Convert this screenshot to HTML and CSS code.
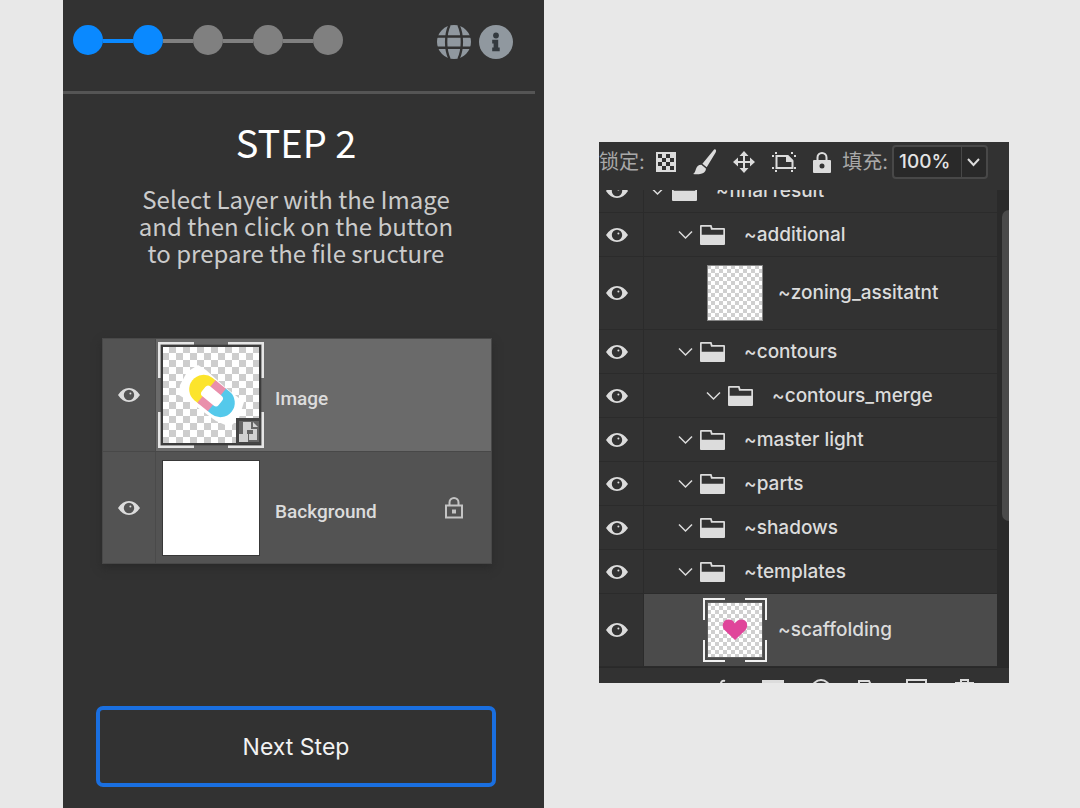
FILE: index.html
```html
<!DOCTYPE html>
<html lang="en">
<head>
<meta charset="utf-8">
<meta name="viewport" content="width=device-width, initial-scale=1">
<title>Step 2</title>
<link rel="stylesheet" href="styles.css">
</head>
<body>
<svg class="defs" aria-hidden="true">
  <defs>
    <symbol id="eye" viewBox="0 0 22 14">
      <path fill-rule="evenodd" d="M0 7C3 2.400 6.700 0 11 0s8 2.400 11 7c-3 4.600-6.700 7-11 7S3 11.600 0 7zM11 1.800a5.200 5.200 0 1 0 0 10.400a5.200 5.200 0 0 0 0-10.400z"/>
      <circle cx="12.400" cy="5.600" r="1"/>
    </symbol>
    <symbol id="chevron" viewBox="0 0 15 10">
      <path d="M1 1.500l6.500 6.500L14 1.500" fill="none" stroke="currentColor" stroke-width="1.500"/>
    </symbol>
    <symbol id="folder" viewBox="0 0 25 20">
      <path fill-rule="evenodd" d="M1 0h10.500l1 3H24a1 1 0 0 1 1 1v15a1 1 0 0 1-1 1H1a1 1 0 0 1-1-1V1a1 1 0 0 1 1-1zM1.700 1.700v8h21.600V4.700H11l-.8-3z"/>
    </symbol>
    <pattern id="checks-small" width="8" height="8" patternUnits="userSpaceOnUse">
      <path d="M0 0h8v8H0z" fill="#fff"/><path d="M0 0h4v4H0zM4 4h4v4H4z" fill="#cfcfcf"/>
    </pattern>
    <pattern id="checks-large" width="14" height="14" patternUnits="userSpaceOnUse" x="4" y="4">
      <path d="M0 0h14v14H0z" fill="#fff"/><path d="M7 0h7v7H7zM0 7h7v7H0z" fill="#cdcdcd"/>
    </pattern>
  </defs>
</svg>

<main class="wizard">
  <header class="wizard-header">
    <ol class="steps" aria-label="Progress">
      <li class="step done"></li>
      <li class="step done"></li>
      <li class="step"></li>
      <li class="step"></li>
      <li class="step"></li>
    </ol>
    <div class="header-actions">
      <button class="icon-button" aria-label="Language">
        <svg viewBox="0 0 34 34" width="34" height="34">
          <circle cx="17" cy="17" r="17" fill="#90989f"/>
          <path d="M0 11.500h34M0 22.800h34M12.500 0C8 10 8 24 12.500 34M21.500 0C26 10 26 24 21.500 34" fill="none" stroke="#323232" stroke-width="2.400"/>
        </svg>
      </button>
      <button class="icon-button" aria-label="Information">
        <svg viewBox="0 0 34 34" width="34" height="34">
          <circle cx="17" cy="17" r="17" fill="#90989f"/>
          <circle cx="17" cy="10.500" r="2.900" fill="#343a3f"/>
          <path d="M13.200 14.800h6v7.800h1.500v3.600h-7.500v-3.600h1.400v-4.200h-1.400z" fill="#343a3f"/>
        </svg>
      </button>
    </div>
  </header>

  <section class="wizard-body">
    <h1>STEP 2</h1>
    <p class="intro">Select Layer with the Image<br>and then click on the button<br>to prepare the file sructure</p>

    <ul class="sample">
      <li class="sample-row selected">
        <span class="sample-eye"><svg width="22" height="14"><use href="#eye"/></svg></span>
        <svg class="sample-thumb" viewBox="0 0 106 106" width="106" height="106">
          <path d="M2 2h102v102H2z" fill="#5b5b5b"/>
          <path d="M3 3h100v100H3z" fill="#3c3c3c"/>
          <path d="M5 5h96v96H5z" fill="url(#checks-large)"/>
          <path d="M22 43l7-13 11-7 8 5 20 18 18 14-5 16-9 9-14-6-26-19-11-7z" fill="#fff"/>
          <g transform="translate(54 54) rotate(39) scale(.9) translate(-54 -53)">
            <path d="M48 37H42a16 16 0 0 0 0 32h6z" fill="#fce42c"/>
            <path d="M60 37h6a16 16 0 0 1 0 32h-6z" fill="#54c9eb"/>
            <path d="M46 37h15v32H46z" fill="#e98fab"/>
            <rect x="42" y="46" width="24" height="14" rx="4" fill="#fff"/>
          </g>
          <path d="M78 76h25v26H78z" fill="#444"/>
          <path d="M81 79h20v21H81z" fill="#666"/>
          <path d="M85 80h8v7h6v11h-8v-6h4v-4h-6v4h-4zM95 80l5 5h-5zM81 92h9v8h-9z" fill="#d2d2d2"/>
          <path d="M1 36V1h35M70 1h35v35M105 70v35H70M36 105H1V70" fill="none" stroke="#e6e6e6" stroke-width="3"/>
        </svg>
        <span class="sample-name">Image</span>
      </li>
      <li class="sample-row">
        <span class="sample-eye"><svg width="22" height="14"><use href="#eye"/></svg></span>
        <svg class="sample-thumb" viewBox="0 0 106 106" width="106" height="106">
          <path d="M4 5h98v96H4z" fill="#383838"/><path d="M5 6h96v94H5z" fill="#fff"/>
        </svg>
        <span class="sample-name">Background</span>
        <svg class="sample-lock" viewBox="0 0 20 22" width="20" height="22">
          <path d="M2 8.500h16v12H2zM5.500 8V5.500a4.500 4.500 0 0 1 9 0V8" fill="none" stroke="currentColor" stroke-width="2"/>
          <path d="M8 12.500h4v4H8z" fill="currentColor"/>
        </svg>
      </li>
    </ul>

    <button class="next">Next Step</button>
  </section>
</main>

<aside class="layers" aria-label="Layers">
  <div class="toolbar">
    <span class="tool-label">锁定:</span>
    <div class="tools">
      <button class="icon-button" aria-label="Lock transparent pixels">
        <svg viewBox="0 0 20 20" width="20" height="20"><path fill-rule="evenodd" d="M0 0h20v20H0zM2 2v4h4V2zM10 2v4h4V2zM6 6v4h4V6zM14 6v4h4V6zM2 10v4h4v-4zM10 10v4h4v-4zM6 14v4h4v-4zM14 14v4h4v-4z"/></svg>
      </button>
      <button class="icon-button" aria-label="Lock image pixels">
        <svg viewBox="0 0 24 26" width="24" height="26"><path d="M22.500.6c1 .8.600 2.100 0 3.200l-8.800 14.400-4.300-3.500L20.300 1.500c.6-.8 1.400-1.500 2.200-.9zM8.400 15.700l4.500 3.700c.3 3.200-2.700 6.600-12.900 5.600 3.600-1.500 1.800-9.400 8.400-9.300z"/></svg>
      </button>
      <button class="icon-button" aria-label="Lock position">
        <svg viewBox="0 0 22 22" width="22" height="22"><path d="M11 0l4.500 5H12v5h5V6.500l5 4.500-5 4.500V12h-5v5h3.500L11 22l-4.500-5H10v-5H5v3.500L0 11l5-4.500V10h5V5H6.500z"/></svg>
      </button>
      <button class="icon-button" aria-label="Lock artboard nesting">
        <svg viewBox="0 0 24 20" width="24" height="20"><path d="M4.500 4h11l5 5v7h-16z" fill="none" stroke="currentColor" stroke-width="2"/><path d="M14 3h2l5 5v2h-7zM3 0h2v2H3zM19 0h2v2h-2zM0 3h2v2H0zM22 3h2v2h-2zM0 15h2v2H0zM22 15h2v2h-2zM3 18h2v2H3zM19 18h2v2h-2z"/></svg>
      </button>
      <button class="icon-button" aria-label="Lock all">
        <svg viewBox="0 0 18 21" width="18" height="21"><path fill-rule="evenodd" d="M3.500 8V5.500a5.500 5.500 0 0 1 11 0V8H17a1 1 0 0 1 1 1v11a1 1 0 0 1-1 1H1a1 1 0 0 1-1-1V9a1 1 0 0 1 1-1zM5.500 8h7V5.500a3.500 3.500 0 0 0-7 0zM9 11.500a2.500 2.500 0 1 0 0 5a2.500 2.500 0 0 0 0-5z"/></svg>
      </button>
    </div>
    <label class="tool-label" for="fill">填充:</label>
    <div class="fill-box">
      <input id="fill" type="text" value="100%">
      <button class="icon-button fill-menu" aria-label="Fill options"><svg viewBox="0 0 13 9" width="13" height="9"><path d="M1 1l5.500 6L12 1" fill="none" stroke="currentColor" stroke-width="2"/></svg></button>
    </div>
  </div>

  <div class="viewport">
    <ul class="tree">
      <li class="row top"><span class="eye"><svg width="22" height="14"><use href="#eye"/></svg></span><span class="cell"><svg class="chevron" width="15" height="10"><use href="#chevron"/></svg><svg class="folder" width="25" height="20"><use href="#folder"/></svg>~final result</span></li>
      <li class="row"><span class="eye"><svg width="22" height="14"><use href="#eye"/></svg></span><span class="cell"><svg class="chevron" width="15" height="10"><use href="#chevron"/></svg><svg class="folder" width="25" height="20"><use href="#folder"/></svg>~additional</span></li>
      <li class="row tall"><span class="eye"><svg width="22" height="14"><use href="#eye"/></svg></span><span class="cell"><svg class="thumb" viewBox="0 0 64 64" width="64" height="64"><path d="M4 4h56v56H4z" fill="#858585"/><path d="M5 5h54v54H5z" fill="url(#checks-small)"/></svg>~zoning_assitatnt</span></li>
      <li class="row"><span class="eye"><svg width="22" height="14"><use href="#eye"/></svg></span><span class="cell"><svg class="chevron" width="15" height="10"><use href="#chevron"/></svg><svg class="folder" width="25" height="20"><use href="#folder"/></svg>~contours</span></li>
      <li class="row nested"><span class="eye"><svg width="22" height="14"><use href="#eye"/></svg></span><span class="cell"><svg class="chevron" width="15" height="10"><use href="#chevron"/></svg><svg class="folder" width="25" height="20"><use href="#folder"/></svg>~contours_merge</span></li>
      <li class="row"><span class="eye"><svg width="22" height="14"><use href="#eye"/></svg></span><span class="cell"><svg class="chevron" width="15" height="10"><use href="#chevron"/></svg><svg class="folder" width="25" height="20"><use href="#folder"/></svg>~master light</span></li>
      <li class="row"><span class="eye"><svg width="22" height="14"><use href="#eye"/></svg></span><span class="cell"><svg class="chevron" width="15" height="10"><use href="#chevron"/></svg><svg class="folder" width="25" height="20"><use href="#folder"/></svg>~parts</span></li>
      <li class="row"><span class="eye"><svg width="22" height="14"><use href="#eye"/></svg></span><span class="cell"><svg class="chevron" width="15" height="10"><use href="#chevron"/></svg><svg class="folder" width="25" height="20"><use href="#folder"/></svg>~shadows</span></li>
      <li class="row"><span class="eye"><svg width="22" height="14"><use href="#eye"/></svg></span><span class="cell"><svg class="chevron" width="15" height="10"><use href="#chevron"/></svg><svg class="folder" width="25" height="20"><use href="#folder"/></svg>~templates</span></li>
      <li class="row tall current"><span class="eye"><svg width="22" height="14"><use href="#eye"/></svg></span><span class="cell"><svg class="thumb" viewBox="0 0 64 64" width="64" height="64"><path d="M4 4h56v56H4z" fill="#5c5c5c"/><path d="M5 5h54v54H5z" fill="url(#checks-small)"/><path d="M32 42L21.500 32c-3.500-4-1.500-10.500 4-10.500 3 0 5 1.500 6.500 4 1.500-2.500 3.500-4 6.500-4 5.500 0 7.500 6.500 4 10.500z" fill="#e0459a"/><path d="M1 22V1h21M42 1h21v21M63 42v21H42M22 63H1V42" fill="none" stroke="#f2f2f2" stroke-width="2"/></svg>~scaffolding</span></li>
    </ul>
    <div class="track"><div class="grip"></div></div>
  </div>

  <div class="footer-tools">
    <button class="icon-button" aria-label="Layer style"><svg viewBox="0 0 24 22" width="24" height="22"><path d="M12 2c-3-1-4 1-4.500 4L6 16M5 7h6M13 9l6 7M19 9l-6 7" fill="none" stroke="currentColor" stroke-width="2"/></svg></button>
    <button class="icon-button" aria-label="Add mask"><svg viewBox="0 0 24 22" width="24" height="22"><path fill-rule="evenodd" d="M1 1h22v18H1zM12 6a4 4 0 1 0 0 8a4 4 0 0 0 0-8z"/></svg></button>
    <button class="icon-button" aria-label="Add adjustment"><svg viewBox="0 0 24 22" width="24" height="22"><circle cx="12" cy="10" r="9" fill="none" stroke="currentColor" stroke-width="2"/></svg></button>
    <button class="icon-button" aria-label="New group"><svg viewBox="0 0 24 22" width="24" height="22"><path d="M2 18V2h10l2 4h9v12z" fill="none" stroke="currentColor" stroke-width="2"/></svg></button>
    <button class="icon-button" aria-label="New layer"><svg viewBox="0 0 24 22" width="24" height="22"><path d="M2 1h19v17H2z" fill="none" stroke="currentColor" stroke-width="2"/></svg></button>
    <button class="icon-button" aria-label="Delete layer"><svg viewBox="0 0 24 22" width="24" height="22"><path d="M2 4h19M8 4V1h7v3M5 4v16h13V4" fill="none" stroke="currentColor" stroke-width="2"/></svg></button>
  </div>
</aside>
</body>
</html>
```
FILE: styles.css
```css
* {
  box-sizing: border-box;
}

body {
  display: grid;
  grid-template-columns: minmax(0, 481fr) minmax(0, 410fr);
  gap: 55px;
  align-items: start;
  min-height: 100vh;
  margin: 0;
  padding: 0 71px 0 63px;
  background: #e8e8e8;
  color: #dcdcdc;
  font-family: Inter, "Noto Sans CJK SC", sans-serif;
}

ul,
ol {
  margin: 0;
  padding: 0;
  list-style: none;
}

svg {
  display: block;
  flex: none;
  fill: currentColor;
}

.defs {
  position: absolute;
  width: 0;
  height: 0;
}

.icon-button {
  display: block;
  flex: none;
  padding: 0;
  border: 0;
  background: none;
  color: inherit;
}

/* Wizard */

.wizard {
  display: flex;
  flex-direction: column;
  min-height: 100vh;
  background: #323232;
}

.wizard-header {
  display: flex;
  justify-content: space-between;
  align-items: flex-start;
  margin-right: 9px;
  padding: 25px 22px 32px 10px;
  border-bottom: 3px solid #555;
}

.steps {
  display: flex;
  gap: 30px;
}

.step {
  position: relative;
  width: 30px;
  height: 30px;
  border-radius: 50%;
  background: #808080;
}

.step + .step::before {
  content: "";
  position: absolute;
  top: 14px;
  right: 100%;
  width: 30px;
  height: 4px;
  background: #808080;
}

.step.done,
.step.done + .step.done::before {
  background: #0a89ff;
}

.header-actions {
  display: flex;
  gap: 8px;
}

.wizard-body {
  display: flex;
  flex: 1;
  flex-direction: column;
  padding: 18px 48px 21px 33px;
}

h1 {
  margin: 0;
  color: #fff;
  font: 400 38px/60px "Noto Sans CJK SC", sans-serif;
  text-align: center;
}

.intro {
  margin: 13px 0 0;
  color: #cbcbcb;
  font: 400 24px/27px "Noto Sans CJK SC", sans-serif;
  text-align: center;
}

.sample {
  margin: 72px 4px 0 6px;
  border: 1px solid #484848;
  background: #535353;
  box-shadow: 0 4px 8px #2a2a2a;
}

.sample-row {
  display: flex;
  align-items: center;
  height: 112px;
  padding-right: 27px;
}

.sample-row + .sample-row {
  border-top: 1px solid #484848;
}

.sample-row.selected {
  background: #6a6a6a;
}

.sample-eye {
  display: flex;
  align-items: center;
  align-self: stretch;
  width: 53px;
  padding-left: 15px;
  border-right: 1px solid #4a4a4a;
  background: #535353;
}

.sample-thumb {
  margin-left: 2px;
}

.sample-name {
  flex: 1;
  margin: 8px 0 0 11px;
  font: 500 19px/24px Roboto, sans-serif;
}

.sample-lock {
  color: #c4c4c4;
}

.next {
  height: 81px;
  margin-top: auto;
  border: 4px solid #1a6fe0;
  border-radius: 7px;
  background: none;
  color: #f2f2f2;
  font: 400 23px/28px Inter, sans-serif;
}

/* Layers panel */

.layers {
  margin-top: 142px;
  overflow: hidden;
  background: #323232;
}

.toolbar {
  display: flex;
  align-items: center;
  height: 48px;
  padding: 0 21px 8px 0;
}

.tool-label {
  color: #a8a8a8;
  font-size: 20px;
  line-height: 24px;
  white-space: nowrap;
}

.tools {
  display: flex;
  flex: 1;
  justify-content: space-between;
  align-items: center;
  padding: 0 11px;
}

.fill-box {
  display: flex;
  width: 96px;
  height: 34px;
  margin-left: 4px;
  border: 2px solid #484848;
  border-radius: 4px;
  background: #292929;
}

.fill-box input {
  flex: 1;
  min-width: 0;
  padding: 0 0 0 5px;
  border: 0;
  background: none;
  color: #e4e4e4;
  font: 500 19px/24px Inter, sans-serif;
}

.fill-menu {
  width: 25px;
  padding-left: 5px;
  border-left: 1px solid #484848;
}

.viewport {
  display: flex;
  overflow: hidden;
  border-bottom: 1px solid #292929;
}

.tree {
  flex: 1;
  min-width: 0;
  margin-top: -21px;
}

.row {
  display: flex;
  height: 44px;
  border-bottom: 1px solid #2b2b2b;
  font-weight: 500;
  font-size: 19px;
  line-height: 24px;
  white-space: nowrap;
}

.row.tall {
  height: 73px;
}

.eye {
  display: flex;
  align-items: center;
  width: 45px;
  padding-left: 7px;
  border-right: 1px solid #2b2b2b;
}

.cell {
  display: flex;
  flex: 1;
  align-items: center;
  padding-left: 34px;
}

.top .cell {
  padding-left: 6px;
}

.nested .cell {
  padding-left: 62px;
}

.tall .cell {
  padding-left: 59px;
}

.current .cell {
  background: #4b4b4b;
}

.chevron {
  margin-right: 7px;
}

.folder {
  margin-right: 19px;
}

.thumb {
  margin-right: 11px;
}

.track {
  width: 12px;
  padding: 20px 0 0 5px;
  background: #2a2a2a;
}

.grip {
  height: 311px;
  border-radius: 7px 0 0 7px;
  background: #4a4a4a;
}

.footer-tools {
  display: flex;
  gap: 24px;
  height: 15px;
  padding: 11px 0 0 114px;
  overflow: hidden;
}
```
